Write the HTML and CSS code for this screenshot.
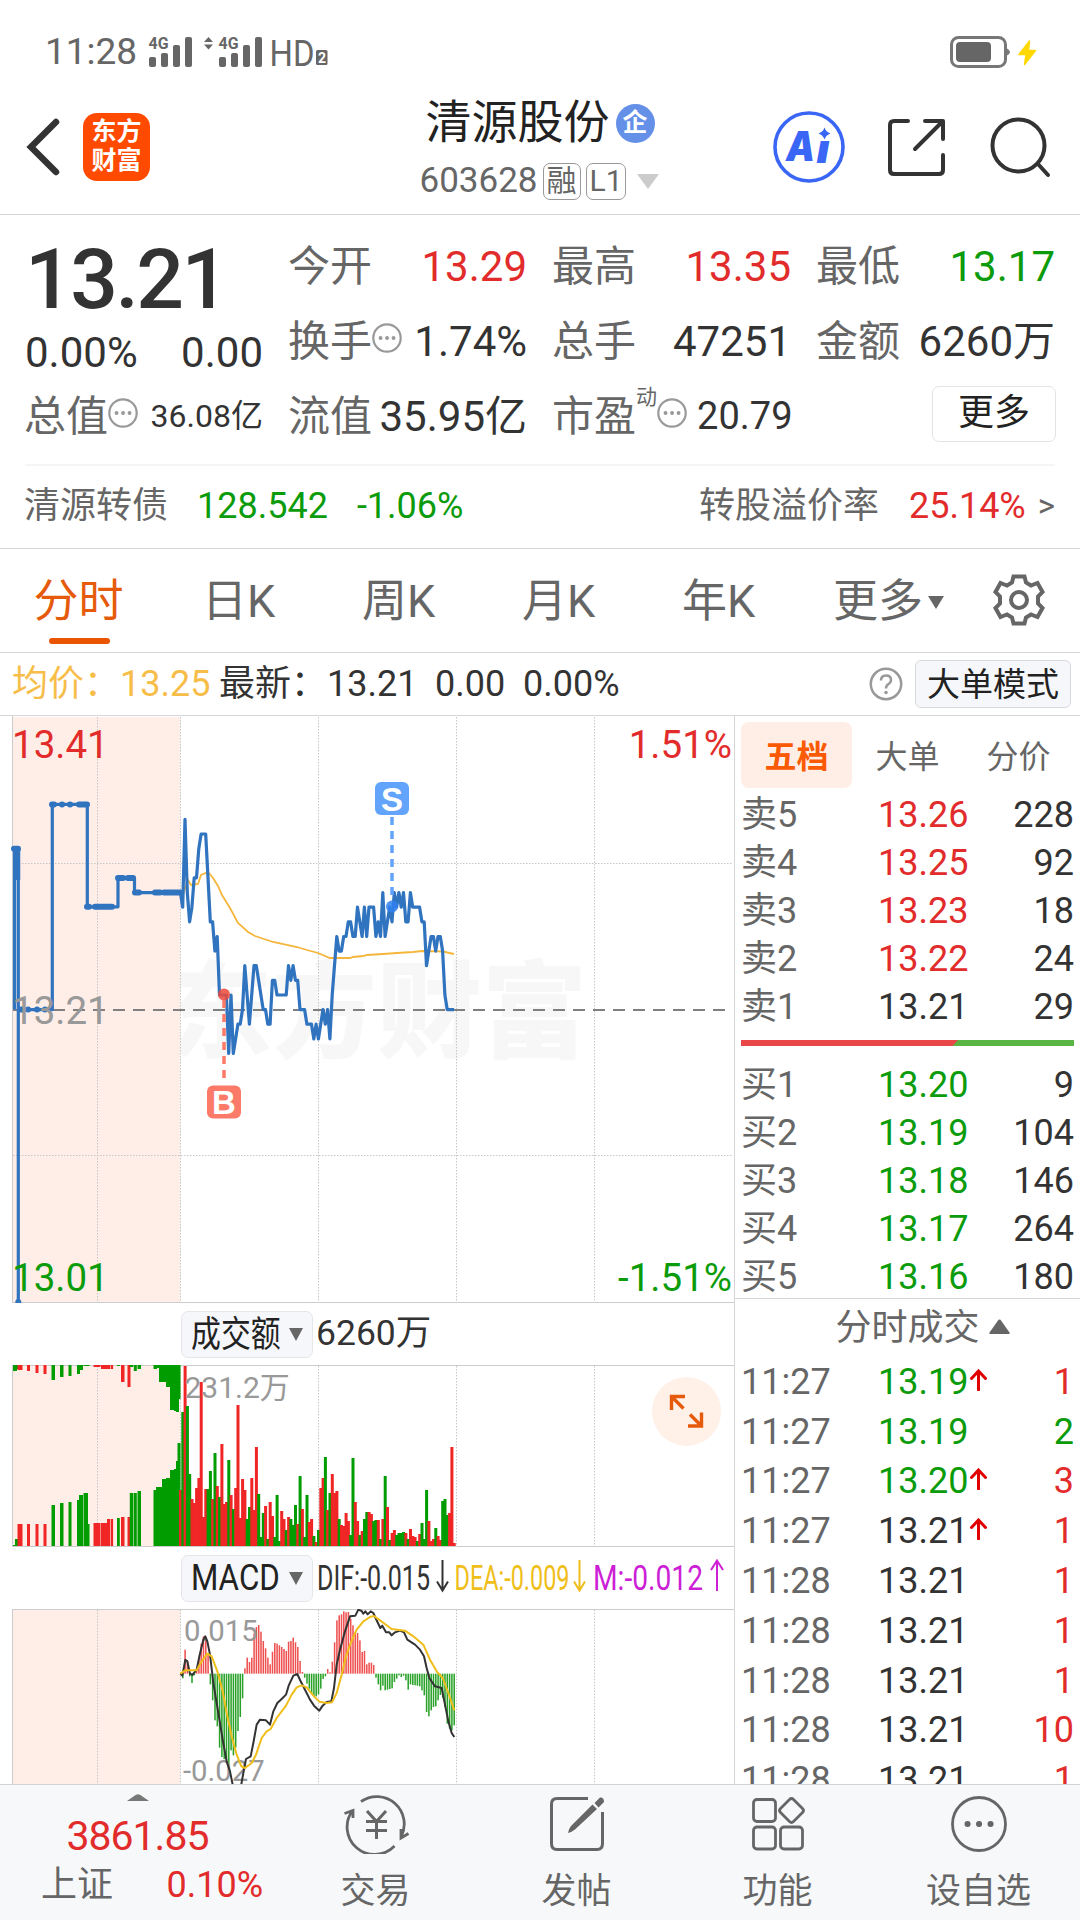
FILE: index.html
```html
<!DOCTYPE html>
<html lang="zh-CN">
<head>
    <meta charset="UTF-8">
    <meta name="viewport" content="width=device-width, initial-scale=1.0">
    <title>清源股份 603628</title>
    <link rel="stylesheet" href="styles.css">
</head>
<body>

    <div class="status-bar">
        <span class="clock">11:28</span>
        <svg class="signals" width="182" height="44" viewBox="147 30 182 44">
            <g fill="#666">
                <text x="148.500" y="49" class="net" textLength="20" lengthAdjust="spacingAndGlyphs">4G</text>
                <rect x="149" y="57" width="7" height="10" rx="2"/>
                <rect x="161" y="53" width="7" height="14" rx="2"/>
                <rect x="173" y="45" width="7" height="22" rx="2"/>
                <rect x="185" y="37" width="7" height="30" rx="2"/>
                <path d="M204 42L208.500 37L213 42ZM204 44.500L208.500 49.500L213 44.500Z"/>
                <text x="218.500" y="49" class="net" textLength="20" lengthAdjust="spacingAndGlyphs">4G</text>
                <rect x="219" y="57" width="7" height="10" rx="2"/>
                <rect x="231" y="53" width="7" height="14" rx="2"/>
                <rect x="243" y="45" width="7" height="22" rx="2"/>
                <rect x="255" y="37" width="7" height="30" rx="2"/>
                <text x="269.500" y="65.500" class="hd" textLength="45" lengthAdjust="spacingAndGlyphs">HD</text>
                <rect x="316" y="50" width="11.500" height="15" rx="1.500"/>
                <text x="318" y="63" class="sim">2</text>
            </g>
        </svg>
        <svg class="battery" width="88" height="34" viewBox="949 35 88 34">
            <rect x="951.500" y="37.500" width="54" height="29" rx="7" fill="none" stroke="#777" stroke-width="3"/>
            <rect x="956" y="42" width="35" height="20" rx="4" fill="#666"/>
            <path d="M1007 48.500Q1010 50 1010 52Q1010 54 1007 55.500Z" fill="#777"/>
            <path d="M1029.500 41L1019 54.500H1026L1024.500 64.500L1035.500 50.500H1028.500Z" fill="#ffd800" stroke="#ffd800" stroke-width="1.500" stroke-linejoin="round"/>
        </svg>
    </div>

    <header class="title-bar">
        <div class="title-left">
            <svg width="34" height="58" viewBox="0 0 34 58">
                <path d="M30 4L5 29L30 54" fill="none" stroke="#333" stroke-width="6.500" stroke-linecap="round"/>
            </svg>
            <div class="logo">东方<br>财富</div>
        </div>
        <div class="title-center">
            <h1>清源股份<span class="badge">企</span></h1>
            <p>603628<span class="tag">融</span><span class="tag level">L1</span>
                <svg width="22" height="15" viewBox="0 0 22 15"><path d="M0 0H22L11 15Z" fill="#ccc"/></svg>
            </p>
        </div>
        <div class="title-right">
            <svg width="72" height="74" viewBox="772.500 110 72 74">
                <circle cx="808.500" cy="147" r="34" fill="none" stroke="#3a66f5" stroke-width="3.600"/>
                <text x="785.500" y="160.500" class="ai" textLength="29" lengthAdjust="spacingAndGlyphs">A</text>
                <text x="816" y="162.500" class="ai" textLength="13" lengthAdjust="spacingAndGlyphs">ı</text>
                <path d="M824 127.500Q825.500 132 830 133.500Q825.500 135 824 139.500Q822.500 135 818 133.500Q822.500 132 824 127.500Z" fill="#3a66f5"/>
            </svg>
            <svg width="62" height="60" viewBox="886 117 62 60" fill="none" stroke="#333" stroke-width="4" stroke-linecap="round" stroke-linejoin="round">
                <path d="M908 121H894Q890 121 890 125V170Q890 174 894 174H939Q943 174 943 170V155M925 121H943V139M941 123L915 149"/>
            </svg>
            <svg width="62" height="62" viewBox="989 115 62 62" fill="none" stroke="#333" stroke-width="4" stroke-linecap="round">
                <circle cx="1018.500" cy="144.500" r="26"/>
                <path d="M1038 163L1048 174"/>
            </svg>
        </div>
    </header>

    <section class="quote">
        <div class="quote-grid">
            <div class="quote-col">
                <div class="price">13.21</div>
                <div class="cell change"><span>0.00%</span><span>0.00</span></div>
                <div class="cell">
                    <label>总值</label><svg class="more-dot" width="30" height="30"><use href="#dots"/></svg>
                    <b class="small">36.08亿</b>
                </div>
            </div>
            <div class="quote-col">
                <div class="cell"><label>今开</label><b class="red">13.29</b></div>
                <div class="cell"><label>换手</label><svg class="more-dot" width="30" height="30"><use href="#dots"/></svg><b>1.74%</b></div>
                <div class="cell"><label>流值</label><b>35.95亿</b></div>
            </div>
            <div class="quote-col">
                <div class="cell"><label>最高</label><b class="red">13.35</b></div>
                <div class="cell"><label>总手</label><b>47251</b></div>
                <div class="cell"><label>市盈</label><sup>动</sup><svg class="more-dot" width="30" height="30"><use href="#dots"/></svg><b class="mid">20.79</b></div>
            </div>
            <div class="quote-col">
                <div class="cell"><label>最低</label><b class="green">13.17</b></div>
                <div class="cell"><label>金额</label><b>6260万</b></div>
                <div class="cell"><button class="more-btn">更多</button></div>
            </div>
        </div>
        <div class="bond">
            <label>清源转债</label>
            <span class="green">128.542</span>
            <span class="green">-1.06%</span>
            <label class="premium">转股溢价率</label>
            <span class="red">25.14%</span>
            <span class="arrow">&gt;</span>
        </div>
    </section>

    <nav class="tabs">
        <a class="active">分时</a>
        <a>日K</a>
        <a>周K</a>
        <a>月K</a>
        <a>年K</a>
        <a class="tab-more">更多<svg width="16" height="13" viewBox="0 0 16 13"><path d="M0 0H16L8 13Z" fill="#666"/></svg></a>
        <a class="gear">
            <svg width="54" height="54" viewBox="-27 -27 54 54" fill="none" stroke="#666" stroke-width="4">
                <path d="M-5.500 -23.500H5.500L7 -17.500L12 -14.500L18.500 -17L23.500 -8L19 -3.500V3.500L23.500 8L18.500 17L12 14.500L7 17.500L5.500 23.500H-5.500L-7 17.500L-12 14.500L-18.500 17L-23.500 8L-19 3.500V-3.500L-23.500 -8L-18.500 -17L-12 -14.500L-7 -17.500Z"/>
                <circle r="8"/>
            </svg>
        </a>
    </nav>

    <div class="info">
        <span class="avg">均价：13.25</span>
        <span class="last">最新：13.21</span>
        <span class="diff">0.00</span>
        <span class="pct">0.00%</span>
        <svg class="help" width="34" height="34" viewBox="0 0 34 34">
            <circle cx="17" cy="17" r="15.200" fill="none" stroke="#999" stroke-width="2.500"/>
            <path d="M12 13.500Q12 8.500 17 8.500Q22 8.500 22 13Q22 15.500 19.500 17Q17 18.500 17 21.500" fill="none" stroke="#999" stroke-width="2.500"/>
            <circle cx="17" cy="25.500" r="1.800" fill="#999"/>
        </svg>
        <button class="mode-btn">大单模式</button>
    </div>

    <main class="main">
        <div class="charts">
            <svg id="priceChart" class="chart" width="734" height="587" viewBox="0 0 734 587">
                <text x="167" y="333" class="watermark" textLength="420" lengthAdjust="spacingAndGlyphs">东方财富</text>
                <rect x="13" y="1" width="167.500" height="585" fill="#feeee7"/>
                <path d="M97.500 1V586M180.500 1V586M318.500 1V586M456.500 1V586M594.500 1V586M13 147.500H733M13 439.500H733" class="grid"/>
                <path d="M12.500 0V587M12 586.500H734" class="frame"/>
                <path d="M13 294H733" stroke="#808080" stroke-width="1.800" stroke-dasharray="12 8"/>
                <polyline class="avg-line" points="182,181 188,164 191,169 198,168 201,159 208,156 213,162 218,170 222,179 230,192 238,207 248,216 255,220 267,224 273,226 297,231 307,234 318,237 330,242 350,242 353,241 363,240 367,239 383,238 397,237 413,236 422,235 443,235.500 454,238"/>
                <path class="price-line" d="M14.500 293.600V132.700H18.300V586V293.600H52.300V88.400H87.300V190.800H118V162H134.500V176.600H180.500"/>
                <path d="M18 132V164" stroke="#3073bf" stroke-width="4.500"/>
                <path class="ticks" d="M14 132.700H18M20 293.600H22M28 293.600h.1M37 293.600h.1M45 293.600h.1M52 88.400H54M62 88.400h.1M70 88.400h.1M79 88.400H87M87 190.800H89M95 190.800H112M118 162H123M128 162H133M135 176.600H139M155 176.600H160M164 176.600H180M18.300 586v.1"/>
                <text x="12" y="42" class="axis red">13.41</text>
                <text x="12" y="308" class="axis flat">13.21</text>
                <text x="12" y="575" class="axis green">13.01</text>
                <text x="732" y="42" class="axis red" text-anchor="end">1.51%</text>
                <text x="732" y="575" class="axis green" text-anchor="end">-1.51%</text>
            </svg>

            <div class="indicator">
                <button class="pick"><span class="pick-zh">成交额</span><i></i></button>
                <span class="amount">6260万</span>
            </div>

            <svg id="volumeChart" class="chart" width="734" height="182" viewBox="0 0 734 182">
                <rect x="13" y="1" width="167.500" height="180" fill="#feeee7"/>
                <path d="M97.500 1V181M180.500 1V181M318.500 1V181M456.500 1V181M594.500 1V181" class="grid"/>
                <path d="M12.500 0V182M12 .5H734M12 181.500H734" class="frame"/>
                <circle cx="686.500" cy="46.500" r="34.500" fill="#fff0e8"/>
                <path d="M671.500 45V31.500H685M671.500 31.500L683.500 43.500M701.500 47.500V61H688M701.500 61L690 49.500" fill="none" stroke="#e65a0c" stroke-width="3.400"/>
            </svg>

            <div class="indicator">
                <button class="pick"><span class="pick-en">MACD</span><i></i></button>
                <svg class="macd-values" width="410" height="62" viewBox="316 0 410 62">
                    <text x="317" y="43" fill="#333" textLength="113" lengthAdjust="spacingAndGlyphs">DIF:-0.015</text>
                    <text x="454.500" y="43" fill="#f0be1a" textLength="115" lengthAdjust="spacingAndGlyphs">DEA:-0.009</text>
                    <text x="593" y="43" fill="#cd1fd6" textLength="110" lengthAdjust="spacingAndGlyphs">M:-0.012</text>
                    <path d="M442.500 13V43M437 34.500L442.500 43.500L448 34.500" stroke="#333"/>
                    <path d="M579.500 13V43M574 34.500L579.500 43.500L585 34.500" stroke="#f0be1a"/>
                    <path d="M717 44V14M711 23L717 13.500L723 23" stroke="#cd1fd6"/>
                </svg>
            </div>

            <!-- three units to a pixel here -->
            <svg id="macdChart" class="chart" width="734" height="175" viewBox="0 208 2202 525">
                <rect x="39" y="210" width="502" height="523" fill="#feeee7"/>
                <path d="M292.500 210V733M541.500 210V733M955.500 210V733M1369.500 210V733M1783.500 210V733" class="grid"/>
                <path d="M37.500 208V733M36 209.500H2202" class="frame"/>
                <g id="macdBars"></g>
                <text x="552" y="305" class="scale">0.015</text>
                <text x="549" y="725" class="scale">-0.027</text>
                <polyline class="dif" points="541,402 547,408 556,360 562,365 570,402 577,406 590,390 598,350 610,300 616,290 622,305 630,345 640,430 655,520 668,600 680,665 690,695 700,745 722,745 730,700 738,658 752,650 760,610 770,555 780,540 798,542 810,555 820,515 832,490 845,478 858,465 866,438 880,408 892,403 902,425 915,450 930,480 942,498 958,513 968,498 980,487 994,485 1002,445 1010,375 1020,330 1035,275 1050,230 1066,228 1075,210 1085,214 1090,222 1096,215 1103,224 1112,215 1120,220 1128,238 1141,265 1147,258 1158,278 1168,278 1175,287 1185,278 1200,273 1212,278 1222,300 1245,315 1260,330 1272,350 1280,385 1288,415 1305,440 1325,445 1335,495 1345,545 1355,580 1363,592"/>
                <polyline class="dea" points="541,402 556,392 590,392 605,365 622,342 635,350 652,395 668,455 680,520 695,590 710,645 724,680 735,685 755,670 768,645 785,595 800,575 812,568 830,535 858,498 875,465 890,443 905,437 920,443 940,468 958,486 980,490 996,488 1010,460 1025,405 1038,350 1052,310 1070,270 1090,245 1110,232 1122,229 1140,242 1175,268 1215,273 1240,290 1270,315 1290,360 1310,395 1328,415 1345,460 1363,512"/>
            </svg>
        </div>

        <aside class="book">
            <div class="book-tabs"><a class="active">五档</a><a>大单</a><a>分价</a></div>
            <div class="levels">
                <div class="row"><label>卖5</label><b class="red">13.26</b><span>228</span></div>
                <div class="row"><label>卖4</label><b class="red">13.25</b><span>92</span></div>
                <div class="row"><label>卖3</label><b class="red">13.23</b><span>18</span></div>
                <div class="row"><label>卖2</label><b class="red">13.22</b><span>24</span></div>
                <div class="row"><label>卖1</label><b>13.21</b><span>29</span></div>
            </div>
            <div class="ratio"><i></i></div>
            <div class="levels buy">
                <div class="row"><label>买1</label><b class="green">13.20</b><span>9</span></div>
                <div class="row"><label>买2</label><b class="green">13.19</b><span>104</span></div>
                <div class="row"><label>买3</label><b class="green">13.18</b><span>146</span></div>
                <div class="row"><label>买4</label><b class="green">13.17</b><span>264</span></div>
                <div class="row"><label>买5</label><b class="green">13.16</b><span>180</span></div>
            </div>
            <div class="trades-title">分时成交<svg width="21" height="15" viewBox="0 0 21 15"><path d="M1 15Q0 15 .5 13.500L9.500 .8Q10.500 0 11.500 .8L20.500 13.500Q21 15 20 15Z" fill="#666"/></svg></div>
            <div class="trades">
                <div class="row"><label>11:27</label><b class="green">13.19<svg class="up"><use href="#up"/></svg></b><span class="red">1</span></div>
                <div class="row"><label>11:27</label><b class="green">13.19</b><span class="green">2</span></div>
                <div class="row"><label>11:27</label><b class="green">13.20<svg class="up"><use href="#up"/></svg></b><span class="red">3</span></div>
                <div class="row"><label>11:27</label><b>13.21<svg class="up"><use href="#up"/></svg></b><span class="red">1</span></div>
                <div class="row"><label>11:28</label><b>13.21</b><span class="red">1</span></div>
                <div class="row"><label>11:28</label><b>13.21</b><span class="red">1</span></div>
                <div class="row"><label>11:28</label><b>13.21</b><span class="red">1</span></div>
                <div class="row"><label>11:28</label><b>13.21</b><span class="red">10</span></div>
                <div class="row"><label>11:28</label><b>13.21</b><span class="red">1</span></div>
            </div>
        </aside>
    </main>

    <footer class="bottom-bar">
        <div class="index">
            <svg width="22" height="7" viewBox="0 0 22 7"><path d="M0 7L9 .8Q11 -.4 13 .8L22 7Z" fill="#777"/></svg>
            <div class="index-value">3861.85</div>
            <div class="index-row"><label>上证</label><span class="red">0.10%</span></div>
        </div>
        <a class="action">
            <svg width="68" height="60" viewBox="341 1794 68 60" fill="none" stroke="#666" stroke-width="2.800">
                <path d="M360 1801.500A27.500 27.500 0 0 1 400 1837M352 1810A27.500 27.500 0 0 0 393.500 1846M343.500 1813.500L352 1810.500V1818M400 1829V1838L407.500 1833.500"/>
                <path d="M366 1811L375.500 1821.500L385 1811M375.500 1821V1839M365 1821.500H386M365 1830.500H386" stroke-width="3"/>
            </svg>
            交易
        </a>
        <a class="action">
            <svg width="68" height="60" viewBox="543 1794 68 60" fill="none" stroke="#666" stroke-width="3">
                <path d="M588 1798.500H557Q551.500 1798.500 551.500 1804V1843.500Q551.500 1849.500 557 1849.500H597Q602.500 1849.500 602.500 1843.500V1812"/>
                <path d="M568 1833Q568.500 1829 571 1826L592.500 1804.500L597 1809L575 1829.500Q572 1832 568 1833ZM594.500 1803L600 1797.500Q604 1797 604 1802L598.500 1807.500Z" fill="#666" stroke="none"/>
            </svg>
            发帖
        </a>
        <a class="action">
            <svg width="68" height="60" viewBox="744 1794 68 60" fill="none" stroke="#666" stroke-width="2.800">
                <rect x="753.500" y="1799.500" width="22" height="22" rx="3.500"/>
                <rect x="753.500" y="1827" width="22" height="22" rx="3.500"/>
                <rect x="780.500" y="1827" width="22" height="22" rx="3.500"/>
                <path d="M789.500 1799.500Q791.500 1797.500 793.500 1799.500L802.500 1808.500Q804.500 1810.500 802.500 1812.500L793.500 1821.500Q791.500 1823.500 789.500 1821.500L780.500 1812.500Q778.500 1810.500 780.500 1808.500Z"/>
            </svg>
            功能
        </a>
        <a class="action">
            <svg width="68" height="60" viewBox="945 1794 68 60" fill="none" stroke="#666" stroke-width="2.800">
                <circle cx="979" cy="1824" r="26.500"/>
                <path d="M967.500 1824h.1M979 1824h.1M990.500 1824h.1" stroke-width="6" stroke-linecap="round"/>
            </svg>
            设自选
        </a>
    </footer>

    <svg class="defs">
        <symbol id="dots" viewBox="0 0 30 30">
            <circle cx="15" cy="15" r="13.700" fill="none" stroke="#999" stroke-width="2.200"/>
            <path d="M8.500 15h.1M15 15h.1M21.500 15h.1" stroke="#999" stroke-width="3.800" stroke-linecap="round"/>
        </symbol>
        <symbol id="up" viewBox="0 0 17 22">
            <path d="M8.500 21V2.500M1.500 9.500L8.500 2L15.500 9.500" fill="none" stroke="#e00000" stroke-width="3" stroke-linecap="round"/>
        </symbol>
    </svg>

    <script src="chart.js"></script>
</body>
</html>
```

FILE: styles.css
```css
* {
    box-sizing: border-box;
}

body {
    margin: 0;
    width: 1080px;
    height: 1920px;
    overflow: hidden;
    background-color: #fff;
    color: #333;
    font-family: Roboto, "Noto Sans CJK SC", sans-serif;
    font-size: 36px;
    line-height: 1.17;
}

b {
    font-weight: 400;
}

button {
    font-family: inherit;
    line-height: 1.17;
    color: #222;
    padding: 0;
}

svg {
    display: block;
    flex: none;
}

.defs {
    display: none;
}

.red {
    color: #e22b2b;
    fill: #e22b2b;
}

.green {
    color: #0b9b0b;
    fill: #0b9b0b;
}

label {
    color: #666;
}

/* status bar */
.status-bar {
    display: flex;
    align-items: center;
    height: 104px;
    padding: 0 43px 0 45px;
    color: #666;
}

.clock {
    width: 102px;
    font-size: 37px;
}

.battery {
    margin-left: auto;
}

.net {
    font-size: 16px;
    font-weight: 700;
}

.hd {
    font-size: 36px;
}

.sim {
    font-size: 14px;
    font-weight: 700;
    fill: #fff;
}

/* title bar */
.title-bar {
    display: grid;
    grid-template-columns: 400px 280px 400px;
    height: 111px;
    border-bottom: 1px solid #d6d6d8;
}

.title-left {
    display: flex;
    align-items: center;
    gap: 23px;
    padding: 0 0 24px 26px;
}

.logo {
    width: 67px;
    height: 68px;
    padding-top: 4px;
    border-radius: 14px;
    background-color: #ff4a00;
    color: #fff;
    font-size: 25px;
    font-weight: 700;
    line-height: 29px;
    text-align: center;
}

.title-center h1 {
    display: flex;
    align-items: center;
    justify-content: center;
    margin: -8px 0 0;
    height: 54px;
    font-size: 46px;
    font-weight: 400;
    color: #222;
}

.badge {
    width: 39px;
    height: 39px;
    margin-left: 6px;
    border-radius: 50%;
    background-color: #6590e8;
    color: #fff;
    font-size: 25px;
    font-weight: 700;
    line-height: 38px;
    text-align: center;
}

.title-center p {
    display: flex;
    align-items: center;
    justify-content: center;
    margin: 5px 2px 0 0;
    height: 52px;
    font-size: 35px;
    color: #666;
}

.tag {
    height: 37px;
    margin-left: 5px;
    padding: 0 3px;
    border: 1.5px solid #999;
    border-radius: 7px;
    font-size: 30px;
    line-height: 34px;
}

.level {
    padding: 0 2px 0 3px;
}

.title-center p svg {
    margin-left: 11px;
}

.title-right {
    display: flex;
    align-items: center;
    justify-content: flex-end;
    gap: 41px;
    padding: 0 29px 24px 0;
}

.ai {
    font-family: Inter, Roboto, sans-serif;
    font-size: 41px;
    font-weight: 900;
    font-style: italic;
    fill: #3a66f5;
}

/* quote */
.quote {
    height: 334px;
    padding: 14px 25px 0;
    border-bottom: 1px solid #d6d6d8;
}

.quote-grid {
    display: grid;
    grid-template-columns: repeat(4, 238px);
    column-gap: 26px;
    height: 237px;
    border-bottom: 2px solid #f5f5f6;
    font-size: 42px;
}

.price {
    height: 100px;
    font-size: 84px;
    font-weight: 500;
    line-height: 101px;
    letter-spacing: -2.5px;
}

.cell {
    display: flex;
    align-items: center;
    height: 75px;
    white-space: nowrap;
}

.change {
    height: 48px;
    margin-bottom: 2px;
    justify-content: space-between;
}

.cell label {
    margin-left: -1px;
}

.cell b {
    margin-left: auto;
}

.cell sup {
    margin-bottom: 38px;
    font-size: 21px;
    line-height: 1;
    color: #666;
}

.more-dot {
    margin-bottom: 8px;
}

.small {
    font-size: 32px;
}

.cell .mid {
    margin-right: -1.5px;
    font-size: 38px;
}

.more-btn {
    width: 124px;
    height: 56px;
    margin: -6px -1px 0 auto;
    border: 1.5px solid #e2e4e6;
    border-radius: 7px;
    background-color: #fff;
    font-size: 36px;
}

.bond {
    display: flex;
    align-items: center;
    height: 80px;
}

.bond label {
    margin-left: -1px;
}

.bond .green {
    margin-left: 29px;
}

.bond .premium {
    margin-left: auto;
}

.bond .red {
    margin-left: 30px;
}

.arrow {
    margin-left: 12px;
    font-size: 33px;
    color: #666;
}

/* chart tabs */
.tabs {
    display: grid;
    grid-template-columns: repeat(6, 160px) 120px;
    height: 104px;
    border-bottom: 1px solid #d6d6d8;
    font-size: 45px;
    color: #666;
}

.tabs a {
    position: relative;
    display: flex;
    align-items: center;
    justify-content: center;
    padding: 4px 3px 0 0;
}

.tabs .active {
    color: #e65a0c;
}

.tabs .active::after {
    content: "";
    position: absolute;
    left: 49px;
    bottom: 8px;
    width: 61px;
    height: 6px;
    border-radius: 3px;
    background-color: #ea5504;
}

.tabs .tab-more {
    padding-left: 20px;
}

.tab-more svg {
    margin-left: 5px;
}

.tabs .gear {
    padding: 0 3px 1px 0;
}

/* info line */
.info {
    display: flex;
    align-items: center;
    height: 63px;
    padding: 0 9px 0 12px;
    border-bottom: 1px solid #d6d6d8;
}

.info span {
    padding-top: 1px;
}

.avg {
    width: 207px;
    color: #f7bd49;
}

.last {
    width: 216px;
}

.diff {
    width: 88px;
}

.help {
    margin-left: auto;
}

.mode-btn {
    width: 156px;
    height: 48px;
    margin-left: 12px;
    border: 1.5px solid #d8dade;
    border-radius: 6px;
    background-color: #f6f7fa;
    font-size: 33px;
    line-height: 47px;
}

/* charts */
.main {
    display: flex;
    height: 1068px;
    overflow: hidden;
}

.charts {
    width: 735px;
    border-right: 1px solid #d6d6d8;
}

.grid {
    fill: none;
    stroke: #c6c6c6;
    stroke-width: 1;
    stroke-dasharray: 1.5 1.5;
    vector-effect: non-scaling-stroke;
}

.frame {
    fill: none;
    stroke: #ccc;
    stroke-width: 1;
    vector-effect: non-scaling-stroke;
}

.watermark {
    font-size: 105px;
    font-weight: 900;
    fill: #f7f7f7;
}

.avg-line {
    fill: none;
    stroke: #f5b63c;
    stroke-width: 1.8;
}

.price-line {
    fill: none;
    stroke: #3073bf;
    stroke-width: 3.2;
    stroke-linejoin: round;
}

.ticks {
    fill: none;
    stroke: #3073bf;
    stroke-width: 6;
    stroke-linecap: round;
}

.axis {
    font-size: 38.5px;
}

.flat {
    fill: #999;
}

.volume-max {
    font-size: 30px;
    fill: #999;
}

.scale {
    font-size: 88px;
    fill: #999;
}

.marker {
    font-family: "Liberation Sans", Arial, sans-serif;
    font-size: 33px;
    font-weight: 700;
    fill: #fff;
    text-anchor: middle;
}

.dif,
.dea {
    fill: none;
    stroke: #333;
    stroke-width: 6;
    stroke-linejoin: round;
}

.dea {
    stroke: #f0be1a;
}

.indicator {
    display: flex;
    align-items: center;
    height: 62px;
    padding-left: 181px;
}

.pick {
    display: flex;
    align-items: center;
    width: 132px;
    height: 47px;
    padding-left: 9px;
    border: 1.5px solid #e4e6ea;
    border-radius: 7px;
    background-color: #f6f7fa;
    font-size: 36px;
    line-height: 43px;
    white-space: nowrap;
}

.pick span {
    flex: none;
    width: 89px;
    transform-origin: 0 50%;
}

.pick-zh {
    padding-top: 3px;
    transform: scaleX(0.83);
}

.pick-en {
    transform: scaleX(0.87);
}

.pick i {
    margin-left: 9px;
    border: 7.5px solid transparent;
    border-top: 13px solid #666;
    border-bottom: 0;
}

.amount {
    margin-left: 3px;
    font-size: 35.5px;
}

.macd-values {
    margin-left: 3px;
    font-size: 35px;
}

.macd-values path {
    fill: none;
    stroke-width: 2;
}

/* order book */
.book {
    width: 345px;
    padding: 0 5px 0 6px;
}

.book-tabs {
    display: flex;
    height: 74px;
    padding-top: 6px;
    font-size: 32px;
    color: #666;
}

.book-tabs a {
    width: 111px;
    height: 66px;
    line-height: 70px;
    border-radius: 8px;
    text-align: center;
}

.book-tabs .active {
    background-color: #ffeee6;
    color: #fb5a04;
    font-weight: 700;
}

.levels {
    height: 240px;
    padding-top: 1px;
}

.row {
    display: flex;
    align-items: center;
    height: 48px;
    padding: 0 1px 0 0;
    white-space: nowrap;
}

.row label {
    width: 137px;
}

.row b {
    display: flex;
    align-items: center;
}

.row span {
    margin-left: auto;
}

.ratio {
    height: 6px;
    margin: 10px 0 14px;
    margin-right: 1px;
    background-color: #5ab544;
}

.ratio i {
    display: block;
    width: 217px;
    height: 6px;
    background-color: #e84848;
    clip-path: polygon(0 0, 100% 0, 97.5% 100%, 0 100%);
}

.buy {
    height: 238px;
}

.trades-title {
    display: flex;
    align-items: center;
    justify-content: center;
    height: 59px;
    margin: 0 -5px 0 -6px;
    padding-left: 30px;
    border-top: 1px solid #d6d6d8;
    color: #666;
}

.trades-title svg {
    margin: -4px 0 0 9px;
}

.trades .row {
    height: 49.8px;
}

.up {
    width: 17px;
    height: 22px;
    margin: -4px 0 0 2px;
}

/* bottom bar */
.bottom-bar {
    display: flex;
    height: 136px;
    border-top: 1px solid #d2d3d9;
    background-color: #f7f8fa;
    color: #666;
}

.index {
    display: flex;
    flex-direction: column;
    align-items: center;
    width: 275px;
    padding-top: 9px;
}

.index-value {
    margin-top: 11px;
    font-size: 41px;
    line-height: 48px;
    letter-spacing: -1px;
    color: #e22b2b;
}

.index-row {
    display: flex;
    justify-content: space-between;
    align-items: center;
    width: 222px;
    height: 50px;
    margin-left: 29px;
}

.action {
    display: flex;
    flex-direction: column;
    align-items: center;
    width: 201px;
    padding-top: 9px;
    font-size: 35px;
    line-height: 76px;
}
```

FILE: chart.js
```javascript
const NS = "http://www.w3.org/2000/svg";
const START = 180.4; // x of 09:30
const STEP = 2.3;    // pixels per minute
const RED = "#f02626";
const GREEN = "#009c00";

// price per minute, in cents above 13.21
const prices = [
    8, 7, 13, 8, 6, 7, 9, 9, 11, 12, 12, 12, 9, 6, 6, 4, 5, 1, 1, 1,
    1, -3, 1, -3, -2, -1, -1, 0, 3, 1, -1, 1, 3, 3, 2, 1, 0, 0, -1, -1,
    2, 2, 1, 1, 1, 1, 1, 3, 2, 3, 2, 2, 0, 0, 0, -1, -1, -1, -2, -1,
    -2, -1, 0, -1, 0, -2, 1, 3, 5, 4, 4, 5, 5, 6, 6, 5, 5, 7, 6, 5,
    7, 5, 7, 7, 7, 5, 6, 5, 8, 5, 6, 7, 6, 8, 7, 8, 7, 8, 6, 6,
    8, 7, 7, 7, 7, 6, 6, 3, 4, 5, 5, 4, 5, 5, 4, 1, 0, 0, 0, 0
];

// bar height per minute, negative when the price fell
const volumes = [
    56, -134, 180, -140, -72, 47, 43, 58, 68, 164, 29, 57, -57, -75, 47, -93, 60, -49, 102, 42,
    44, -86, 51, -37, 58, 141, 28, 67, 56, -27, -39, 68, 36, 99, -52, -9, -33, 40, -7, 44,
    30, -9, -51, -5, 35, 27, -16, 29, -27, -21, -41, 22, -70, 37, -9, -51, 24, 27, -10, 4,
    -16, 58, 68, -89, 36, -53, 72, 53, 55, -27, 21, 20, 33, 25, -11, -88, 44, 25, -11, 15,
    -27, -34, 34, 32, -25, -26, 26, -7, 27, -70, 39, -6, 13, 16, -11, -13, -13, -14, 13, -7,
    17, 10, 9, -5, 12, -23, -7, -56, 25, 5, 7, -18, 10, 6, -45, -47, -31, 33, 99, 3
];

// call auction: x, width, height from the bottom, height from the top, colour
const auction = [
    [13, 4, 1, 6, GREEN], [15, 3, 7, 4, GREEN], [17.5, 5, 22, 5, RED], [27, 3, 22, 6, RED],
    [35.5, 3, 22, 8, RED], [43.5, 3, 22, 9, RED], [51.5, 3.5, 41, 15, GREEN],
    [60, 3.5, 43, 12, GREEN], [68.5, 3, 44, 11, GREEN], [77, 3, 46, 9, GREEN],
    [79, 4, 51, 5, GREEN], [83.5, 4.5, 53, 1, GREEN], [87, 2.5, 22, 1, GREEN],
    [93.5, 7, 23, 2, RED], [101, 6, 23, 4, RED], [107, 3.2, 27, 4, RED], [110.8, 2.3, 27, 4, RED],
    [117, 2.8, 28, 1, GREEN], [121, 3.5, 29, 17, RED], [127.5, 3, 29, 22, RED],
    [129.8, 3.5, 53, 2, GREEN], [133.8, 3, 53, 6, GREEN], [137.5, 3.5, 55, 4, GREEN],
    [153.5, 3.5, 56, 4, GREEN], [156, 4, 59, 3, GREEN], [159, 5, 59, 17, GREEN],
    [162, 5, 67, 17, GREEN], [166, 5, 68, 22, GREEN], [170, 5, 76, 45, GREEN],
    [174, 4, 77, 46, GREEN], [176, 3, 85, 47, GREEN], [177.5, 3, 103, 34, GREEN]
];

// MACD histogram, three units to a pixel
const macd = [
    0, -14, 72, 40, -8, -28, -5, 15, 50, 90, 112, 105, 58, -32, -80, -140, -158, -222, -250, -256,
    -260, -290, -230, -245, -222, -172, -130, -74, 16, 48, 35, 48, 120, 140, 146, 126, 98, 76, 48, 28,
    66, 92, 90, 85, 80, 74, 68, 96, 98, 108, 94, 80, 38, 5, -12, -30, -45, -60, -70, -68,
    -62, -45, -16, -8, 14, 4, 36, 94, 160, 175, 178, 187, 184, 185, 165, 145, 125, 122, 100, 65,
    68, 28, 33, 33, 26, -12, -32, -50, -36, -50, -48, -46, -44, -25, -15, -5, -10, -6, -20, -48,
    -32, -34, -35, -36, -38, -50, -65, -115, -128, -110, -100, -98, -80, -64, -72, -100, -150, -165, -170, -155
];

function add(parent, name, attrs, text) {
    const el = document.createElementNS(NS, name);
    for (const key in attrs) {
        el.setAttribute(key, attrs[key]);
    }
    if (text) {
        el.textContent = text;
    }
    parent.appendChild(el);
    return el;
}

function bar(parent, x, y, width, height, fill) {
    add(parent, "rect", { x: x, y: y, width: width, height: height, fill: fill });
}

function drawPrice() {
    const svg = document.getElementById("priceChart");
    const points = prices.map((p, i) => (START + i * STEP).toFixed(1) + "," + (293.6 - p * 14.63).toFixed(1));
    add(svg, "polyline", { class: "price-line", points: points.join(" ") });

    drawMarker(svg, "S", 392, 190.5, 66, "#62a4fb", "#2f80f0", 101, 184);
    drawMarker(svg, "B", 224, 278.5, 369.5, "#fb7a68", "#ee4a3c", 284, 368);
}

// dot on the line, dashed stem and a lettered box
function drawMarker(svg, letter, x, dotY, boxY, fill, dot, from, to) {
    add(svg, "circle", { cx: x, cy: dotY, r: 6, fill: dot, "fill-opacity": 0.85 });
    add(svg, "path", { d: `M${x} ${from}V${to}`, stroke: fill, "stroke-width": 3.5, "stroke-dasharray": "8 6" });
    add(svg, "rect", { x: x - 17, y: boxY, width: 34, height: 33, rx: 6, fill: fill });
    add(svg, "text", { x: x, y: boxY + 28.5, class: "marker" }, letter);
}

function drawVolume() {
    const svg = document.getElementById("volumeChart");
    auction.forEach(([x, width, bottom, top, fill]) => {
        bar(svg, x, 181 - bottom, width, bottom, fill);
        bar(svg, x, 0, width, top, fill);
    });
    volumes.forEach((v, i) => {
        const h = Math.abs(v);
        bar(svg, START + i * STEP - 1.4, 181 - h, 3, h, v > 0 ? RED : GREEN);
    });
    add(svg, "text", { x: 184.5, y: 33, class: "volume-max" }, "231.2万");
}

function drawMacd() {
    const group = document.getElementById("macdBars");
    macd.forEach((v, i) => {
        const x = (START + i * STEP) * 3 - 2;
        bar(group, x, v > 0 ? 402 - v : 402, 4.6, Math.abs(v), v > 0 ? "#ef5050" : "#2aa22a");
    });
}

drawPrice();
drawVolume();
drawMacd();
```
